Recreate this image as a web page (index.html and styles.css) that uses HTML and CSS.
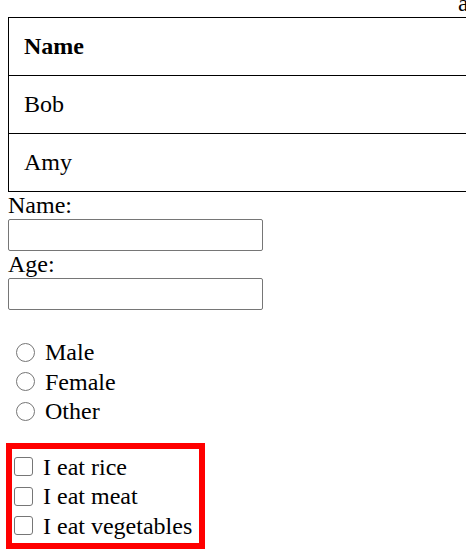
FILE: index.html
```html
<!DOCTYPE html>
<html lang="en">
<head>
<meta charset="utf-8">
<title>Form</title>
<link rel="stylesheet" href="styles.css">
</head>
<body>
<div class="topline">a</div>
<table class="people">
  <tr><th>Name</th></tr>
  <tr><td>Bob</td></tr>
  <tr><td>Amy</td></tr>
</table>
<form class="form">
  <label class="field-label" for="name">Name:</label>
  <input class="text-input" type="text" id="name">
  <label class="field-label" for="age">Age:</label>
  <input class="text-input" type="text" id="age">
  <div class="radios">
    <label class="choice"><input class="radio" type="radio" name="gender"><span class="choice-text">Male</span></label>
    <label class="choice"><input class="radio" type="radio" name="gender"><span class="choice-text">Female</span></label>
    <label class="choice"><input class="radio" type="radio" name="gender"><span class="choice-text">Other</span></label>
  </div>
  <div class="checks">
    <label class="choice"><input class="check" type="checkbox"><span class="choice-text">I eat rice</span></label>
    <label class="choice"><input class="check" type="checkbox"><span class="choice-text">I eat meat</span></label>
    <label class="choice"><input class="check" type="checkbox"><span class="choice-text">I eat vegetables</span></label>
  </div>
</form>
</body>
</html>
```
FILE: styles.css
```css
html, body {
  overflow: hidden;
}
body {
  margin: 0;
  padding: 0 8px;
  font-family: "Liberation Serif", "Times New Roman", serif;
  font-size: 24px;
  color: #000;
  background: #fff;
}
.topline {
  margin-top: -9px;
  height: 24px;
  line-height: 24px;
  padding-left: 450px;
  white-space: nowrap;
}
.people {
  margin-top: 2px;
  width: 620px;
  border-collapse: collapse;
}
.people th,
.people td {
  border: 1px solid #000;
  padding: 15px 15px;
  line-height: 27px;
  text-align: left;
  font-size: 24px;
}
.people th {
  font-weight: bold;
}
.form {
  margin: 0;
}
.field-label {
  display: block;
  line-height: 27px;
}
.text-input {
  display: block;
  box-sizing: border-box;
  width: 255px;
  height: 32px;
  margin: 0;
  padding: 0 3px;
  border: 1px solid #767676;
  border-radius: 2px;
  background: #fff;
  font: inherit;
}
.radios {
  margin-top: 28px;
}
.choice {
  display: flex;
  align-items: flex-start;
  height: 29.6px;
}
.choice-text {
  line-height: 29.6px;
  white-space: nowrap;
}
.radio,
.check {
  -webkit-appearance: none;
  appearance: none;
  box-sizing: border-box;
  width: 19px;
  height: 19px;
  margin: 4.5px 10px 0 0;
  border: 1px solid #767676;
  background: #fff;
  flex: none;
}
.radio {
  border-radius: 50%;
  margin-left: 8px;
}
.check {
  border-radius: 3px;
  margin-left: 2px;
}
.checks {
  margin-top: 16px;
  margin-left: -2px;
  width: 187px;
  padding: 4px 0 1px;
  border: 6px solid #f00;
}
```
